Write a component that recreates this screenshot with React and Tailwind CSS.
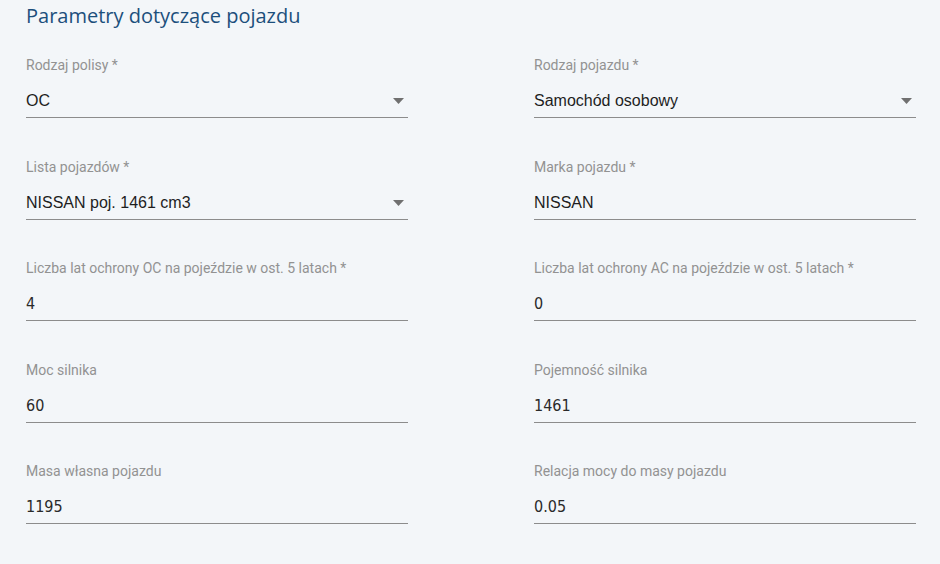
import React from "react";

const fields = [
  { label: "Rodzaj polisy *", value: "OC", select: true },
  { label: "Rodzaj pojazdu *", value: "Samochód osobowy", select: true },
  { label: "Lista pojazdów *", value: "NISSAN poj. 1461 cm3", select: true },
  { label: "Marka pojazdu *", value: "NISSAN", select: false, arial: true },
  { label: "Liczba lat ochrony OC na pojeździe w ost. 5 latach *", value: "4" },
  { label: "Liczba lat ochrony AC na pojeździe w ost. 5 latach *", value: "0" },
  { label: "Moc silnika", value: "60" },
  { label: "Pojemność silnika", value: "1461" },
  { label: "Masa własna pojazdu", value: "1195" },
  { label: "Relacja mocy do masy pojazdu", value: "0.05" },
];

function Field({ label, value, select, arial }) {
  return (
    <div className="flex flex-col">
      <div className="h-5 text-[14px] leading-5 text-[#929292]" style={{ fontFamily: "Roboto, sans-serif" }}>
        {label}
      </div>
      <div className="mt-[14px] flex h-[29px] items-start justify-between border-b border-[#8c8c8c] pb-[5px]">
        <span
          className={
            select || arial
              ? "text-[16px] leading-6 text-[#1e1e1e]"
              : "text-[16px] leading-6 text-[#2a2a2a]"
          }
          style={{
            fontFamily:
              select || arial
                ? '"Liberation Sans", Arial, sans-serif'
                : '"DejaVu Sans Condensed", "Open Sans", sans-serif',
          }}
        >
          {value}
        </span>
        {select && (
          <svg width="11" height="6" viewBox="0 0 11 6" className="mr-[4px] mt-[9px]">
            <path d="M0 0 L11 0 L5.5 6 Z" fill="#707070" />
          </svg>
        )}
      </div>
    </div>
  );
}

export default function App() {
  return (
    <div className="h-[564px] w-[940px] overflow-hidden bg-[#f3f6f9] pl-[26px] pr-[24px] pt-[2px]">
      <h1
        className="text-[20px] leading-7 text-[#1c4f7c]"
        style={{ fontFamily: '"Open Sans", sans-serif' }}
      >
        Parametry dotyczące pojazdu
      </h1>
      <div className="mt-[25px] grid grid-cols-2 gap-x-[126px] gap-y-[38.5px]">
        {fields.map((f) => (
          <Field key={f.label} {...f} />
        ))}
      </div>
    </div>
  );
}
